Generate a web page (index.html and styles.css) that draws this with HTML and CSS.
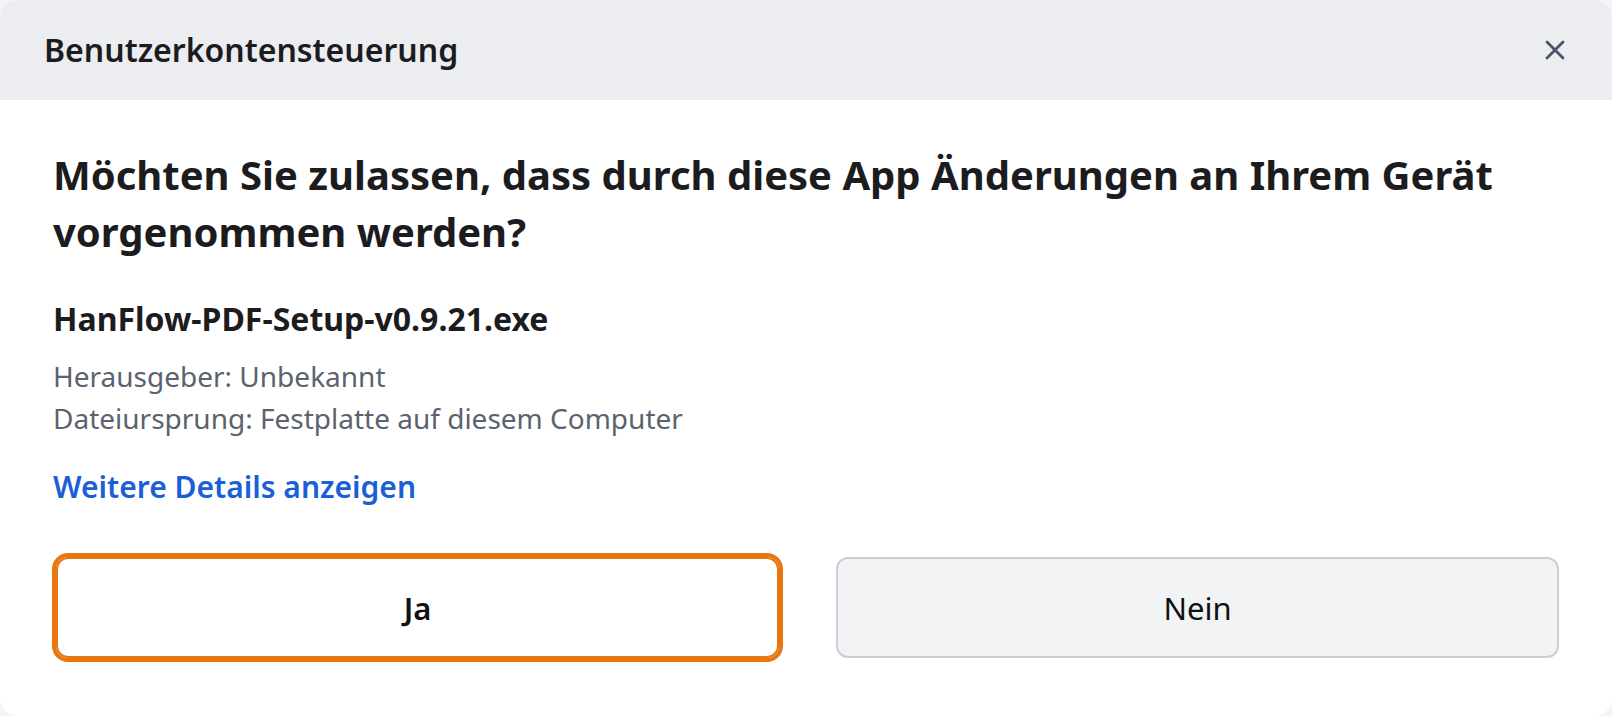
FILE: index.html
```html
<!DOCTYPE html>
<html lang="de">
<head>
<meta charset="utf-8">
<title>Benutzerkontensteuerung</title>
<link rel="stylesheet" href="styles.css">
</head>
<body>
<div class="dialog">
  <header class="dialog-header">
    <h1 class="dialog-title">Benutzerkontensteuerung</h1>
    <button class="close-btn" aria-label="Schließen">
      <svg width="22" height="22" viewBox="0 0 22 22"><path d="M3 3 L19 19 M19 3 L3 19" stroke="#475569" stroke-width="2.8" stroke-linecap="round" fill="none"/></svg>
    </button>
  </header>
  <main class="dialog-body">
    <h2 class="question">Möchten Sie zulassen, dass durch diese App Änderungen an Ihrem Gerät vorgenommen werden?</h2>
    <div class="filename">HanFlow-PDF-Setup-v0.9.21.exe</div>
    <div class="meta">
      <div>Herausgeber: Unbekannt</div>
      <div>Dateiursprung: Festplatte auf diesem Computer</div>
    </div>
    <a class="details-link" href="#">Weitere Details anzeigen</a>
    <div class="actions">
      <button class="btn btn-yes">Ja</button>
      <button class="btn btn-no">Nein</button>
    </div>
  </main>
</div>
</body>
</html>
```
FILE: styles.css
```css
* { box-sizing: border-box; }
html, body { margin: 0; padding: 0; }
body {
  background: #f3f4f6;
  font-family: "Noto Sans", "Open Sans", sans-serif;
  color: #1a1a1a;
  width: 1612px;
  height: 716px;
  overflow: hidden;
}
.dialog {
  width: 1612px;
  height: 716px;
  background: #ffffff;
  border-radius: 18px;
  overflow: hidden;
  display: flex;
  flex-direction: column;
}
.dialog-header {
  height: 100px;
  flex: none;
  background: #ecedf1;
  display: flex;
  align-items: center;
  justify-content: space-between;
  padding: 0 43px 0 44px;
}
.dialog-title {
  margin: 0;
  font-size: 32px;
  font-weight: 600;
  color: #1c1c1e;
  line-height: 40px;
}
.close-btn {
  border: none;
  background: transparent;
  padding: 0;
  width: 28px;
  height: 28px;
  display: flex;
  align-items: center;
  justify-content: center;
}
.dialog-body {
  flex: 1;
  padding: 46px 53px 0 53px;
  display: flex;
  flex-direction: column;
  align-items: flex-start;
}
.question {
  margin: 0;
  font-size: 40px;
  font-weight: 700;
  line-height: 57px;
  color: #1c1c1e;
}
.filename {
  margin-top: 39px;
  font-size: 32px;
  font-weight: 700;
  line-height: 40px;
  color: #1c1c1e;
}
.meta {
  margin-top: 16px;
  font-size: 28px;
  line-height: 42px;
  color: #5b6270;
}
.details-link {
  margin-top: 28px;
  font-size: 30px;
  font-weight: 600;
  line-height: 40px;
  color: #1a5fd6;
  text-decoration: none;
}
.actions {
  margin-top: 50px;
  align-self: stretch;
  display: grid;
  grid-template-columns: 1fr 1fr;
  gap: 57px;
  padding-left: 3px;
}
.btn {
  height: 101px;
  border-radius: 12px;
  font-family: inherit;
  font-size: 31px;
  color: #111;
}
.btn-yes {
  background: #ffffff;
  border: 2px solid #e8770f;
  outline: 4px solid #e8770f;
  outline-offset: 0;
  font-weight: 600;
}
.btn-no {
  background: #f2f3f5;
  border: 2px solid #c9ced6;
  font-weight: 400;
}
```
